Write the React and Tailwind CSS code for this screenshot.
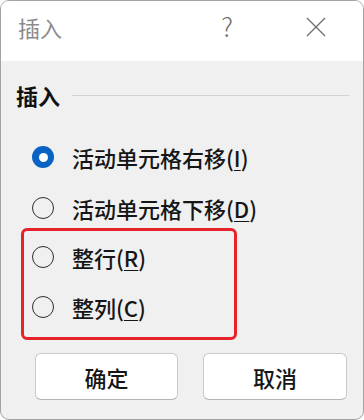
import React from "react";

const font = { fontFamily: '"Noto Sans CJK SC", "Noto Sans", sans-serif' };

function Radio({ checked }) {
  if (checked) {
    return (
      <span className="w-[22px] h-[22px] rounded-full bg-[#0a62c4] flex items-center justify-center shrink-0">
        <span className="w-[9px] h-[9px] rounded-full bg-white" />
      </span>
    );
  }
  return <span className="block w-[22px] h-[22px] rounded-full border-[1.5px] border-[#2e2e2e] bg-transparent shrink-0" />;
}

function Row({ checked, label, k, className = "" }) {
  return (
    <div className={"flex items-center h-[40px] " + className}>
      <Radio checked={checked} />
      <span className="ml-[18px] text-[22px] leading-none font-medium text-[#161616] whitespace-nowrap">
        {label}(<span className="underline underline-offset-[3px] decoration-[1px]">{k}</span>)
      </span>
    </div>
  );
}

export default function App() {
  return (
    <div className="w-[364px] h-[420px] bg-white" style={font}>
      <div className="w-[364px] h-[420px] border border-[#a3a3a3] rounded-[9px] overflow-hidden flex flex-col bg-[#f0f0f0]">
        <div className="h-[60px] bg-white flex items-center shrink-0 pr-[27px] pb-[8px]">
          <span className="pl-[17px] text-[22px] leading-none text-[#8a8a8a]">插入</span>
          <span className="ml-auto w-[40px] flex justify-center text-[26px] font-light leading-none text-[#707070] -mt-[2px]">?</span>
          <span className="ml-[49px] w-[40px] flex justify-center">
            <svg width="20" height="20" viewBox="0 0 20 20">
              <path d="M1 1 L19 19 M19 1 L1 19" stroke="#6e6e6e" strokeWidth="1.3" fill="none" />
            </svg>
          </span>
        </div>
        <div className="flex items-center h-[28px] mt-[20px] pl-[15px] pr-[14px]">
          <span className="text-[22px] leading-none font-bold text-[#111]">插入</span>
          <span className="flex-1 h-px bg-[#d3d3d3] ml-[12px]" />
        </div>
        <div className="flex flex-col pl-[31px]">
          <Row checked label="活动单元格右移" k="I" className="mt-[28px]" />
          <Row label="活动单元格下移" k="D" className="mt-[11px]" />
        </div>
        <div className="ml-[20px] w-[216px] border-[3px] border-[#e5232a] rounded-[6px] pl-[8px] pt-[6px] pb-[10px] flex flex-col">
          <Row label="整行" k="R" />
          <Row label="整列" k="C" className="mt-[10px]" />
        </div>
        <div className="flex mt-[13px] pl-[34px] gap-[25px]">
          <button className="w-[143px] h-[47px] bg-white border border-[#cacaca] border-b-[#b5b5b5] rounded-[6px] text-[22px] leading-none font-medium text-[#161616]" style={font}>确定</button>
          <button className="w-[144px] h-[47px] bg-white border border-[#cacaca] border-b-[#b5b5b5] rounded-[6px] text-[22px] leading-none font-medium text-[#161616]" style={font}>取消</button>
        </div>
      </div>
    </div>
  );
}
